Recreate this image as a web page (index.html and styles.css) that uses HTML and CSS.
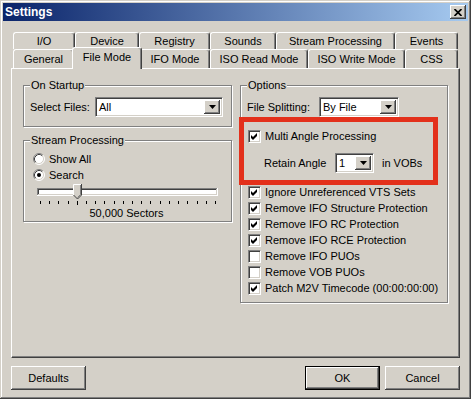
FILE: index.html
```html
<!DOCTYPE html>
<html>

<head>
	<meta charset="utf-8">
	<title>Settings</title>
	<link rel="stylesheet" href="styles.css">
</head>

<body>
	<div class="window">
		<div class="titlebar">
			<span class="title">Settings</span>
			<span class="closeBtn">
				<svg width="8" height="7" viewBox="0 0 8 7">
					<path d="M0.5 0 L7.5 7 M7.5 0 L0.5 7" stroke="#000" stroke-width="1.7" />
				</svg>
			</span>
		</div>

		<div class="client">
			<div class="tabRow back">
				<div class="tab tab-io">I/O</div>
				<div class="tab tab-device">Device</div>
				<div class="tab tab-registry">Registry</div>
				<div class="tab tab-sounds">Sounds</div>
				<div class="tab tab-stream">Stream Processing</div>
				<div class="tab tab-events">Events</div>
			</div>
			<div class="tabRow front">
				<div class="tab tab-general">General</div>
				<div class="tab tab-filemode selected">File Mode</div>
				<div class="tab tab-ifomode">IFO Mode</div>
				<div class="tab tab-isoread">ISO Read Mode</div>
				<div class="tab tab-isowrite">ISO Write Mode</div>
				<div class="tab tab-css">CSS</div>
			</div>

			<div class="panel">
				<div class="col">
					<div class="group">
						<span class="groupLabel">On Startup</span>
						<div class="field">
							<span>Select Files:</span>
							<div class="combo combo-files">
								<span class="value">All</span>
								<span class="drop"><svg width="7" height="4" viewBox="0 0 7 4"><path d="M0 0H7L3.5 4Z" /></svg></span>
							</div>
						</div>
					</div>

					<div class="group stream">
						<span class="groupLabel">Stream Processing</span>
						<div class="option first">
							<svg class="radio" width="12" height="12" viewBox="0 0 12 12">
								<circle cx="6" cy="6" r="5" fill="#fff" />
								<path d="M2.11 9.89 A5.5 5.5 0 0 1 9.89 2.11" fill="none" stroke="#808080" />
								<path d="M2.11 9.89 A5.5 5.5 0 0 0 9.89 2.11" fill="none" stroke="#fff" />
								<path d="M2.82 9.18 A4.5 4.5 0 0 1 9.18 2.82" fill="none" stroke="#404040" />
								<path d="M2.82 9.18 A4.5 4.5 0 0 0 9.18 2.82" fill="none" stroke="#d4d0c8" />
							</svg>
							<span>Show All</span>
						</div>
						<div class="option">
							<svg class="radio" width="12" height="12" viewBox="0 0 12 12">
								<circle cx="6" cy="6" r="5" fill="#fff" />
								<path d="M2.11 9.89 A5.5 5.5 0 0 1 9.89 2.11" fill="none" stroke="#808080" />
								<path d="M2.11 9.89 A5.5 5.5 0 0 0 9.89 2.11" fill="none" stroke="#fff" />
								<path d="M2.82 9.18 A4.5 4.5 0 0 1 9.18 2.82" fill="none" stroke="#404040" />
								<path d="M2.82 9.18 A4.5 4.5 0 0 0 9.18 2.82" fill="none" stroke="#d4d0c8" />
								<circle cx="6" cy="6" r="2" fill="#000" />
							</svg>
							<span>Search</span>
						</div>

						<svg class="slider" width="192" height="23" viewBox="0 0 192 23">
							<rect x="7" y="5" width="181" height="8" fill="#fff" />
							<rect x="7" y="5" width="180" height="1" fill="#808080" />
							<rect x="7" y="5" width="1" height="7" fill="#808080" />
							<rect x="8" y="6" width="178" height="1" fill="#404040" />
							<rect x="8" y="6" width="1" height="5" fill="#404040" />
							<rect x="8" y="11" width="179" height="1" fill="#d4d0c8" />
							<rect x="186" y="6" width="1" height="6" fill="#d4d0c8" />
							<!-- thumb -->
							<path d="M43 1H52V12L47.5 16.5L43 12Z" fill="#d4d0c8" />
							<path d="M43.5 12V1.5H51" fill="none" stroke="#fff" />
							<path d="M51.5 1V12L47.5 16L43.5 12" fill="none" stroke="#404040" />
							<path d="M50.5 2V11.5L47.5 14.5" fill="none" stroke="#808080" />
							<!-- ticks -->
							<path d="M10.5 18v3M19.5 18v3M28.5 18v3M38.5 18v3M47.5 18v4M56.5 18v3M65.5 18v3M74.5 18v3M84.5 18v3M93.5 18v3M102.5 18v3M111.5 18v3M120.5 18v3M130.5 18v3M139.5 18v3M148.5 18v3M157.5 18v3M167.5 18v3M176.5 18v3M185.5 18v3" stroke="#000" />
						</svg>
						<div class="sliderText">50,000 Sectors</div>
					</div>
				</div>

				<div class="col">
					<div class="group options">
						<span class="groupLabel">Options</span>
						<div class="field split">
							<span class="splitLabel">File Splitting:</span>
							<div class="combo combo-split">
								<span class="value">By File</span>
								<span class="drop"><svg width="7" height="4" viewBox="0 0 7 4"><path d="M0 0H7L3.5 4Z" /></svg></span>
							</div>
						</div>

						<div class="check multi">
							<span class="box"><svg width="7" height="7" viewBox="0 0 7 7"><path d="M0 2L2 4L6 0V3L2 7L0 5Z" /></svg></span>
							<span>Multi Angle Processing</span>
						</div>
						<div class="field retain">
							<span class="retainLabel">Retain Angle</span>
							<div class="combo combo-angle">
								<span class="value">1</span>
								<span class="drop"><svg width="7" height="4" viewBox="0 0 7 4"><path d="M0 0H7L3.5 4Z" /></svg></span>
							</div>
							<span class="vobs">in VOBs</span>
						</div>

						<div class="checkList">
							<div class="check">
								<span class="box"><svg width="7" height="7" viewBox="0 0 7 7"><path d="M0 2L2 4L6 0V3L2 7L0 5Z" /></svg></span>
								<span>Ignore Unreferenced VTS Sets</span>
							</div>
							<div class="check">
								<span class="box"><svg width="7" height="7" viewBox="0 0 7 7"><path d="M0 2L2 4L6 0V3L2 7L0 5Z" /></svg></span>
								<span>Remove IFO Structure Protection</span>
							</div>
							<div class="check">
								<span class="box"><svg width="7" height="7" viewBox="0 0 7 7"><path d="M0 2L2 4L6 0V3L2 7L0 5Z" /></svg></span>
								<span>Remove IFO RC Protection</span>
							</div>
							<div class="check">
								<span class="box"><svg width="7" height="7" viewBox="0 0 7 7"><path d="M0 2L2 4L6 0V3L2 7L0 5Z" /></svg></span>
								<span>Remove IFO RCE Protection</span>
							</div>
							<div class="check">
								<span class="box"></span>
								<span>Remove IFO PUOs</span>
							</div>
							<div class="check">
								<span class="box"></span>
								<span>Remove VOB PUOs</span>
							</div>
							<div class="check">
								<span class="box"><svg width="7" height="7" viewBox="0 0 7 7"><path d="M0 2L2 4L6 0V3L2 7L0 5Z" /></svg></span>
								<span>Patch M2V Timecode (00:00:00:00)</span>
							</div>
						</div>

						<div class="mark"></div>
					</div>
				</div>
			</div>

			<div class="buttons">
				<div class="btn">Defaults</div>
				<div class="btn ok">OK</div>
				<div class="btn cancel">Cancel</div>
			</div>
		</div>
	</div>
</body>

</html>
```

FILE: styles.css
```css
body {
	margin: 0;
	background-color: #d4d0c8;
	font-family: "Liberation Sans", Arial, sans-serif;
	font-size: 11px;
	color: #000;
}

.window {
	width: 471px;
	height: 399px;
	box-sizing: border-box;
	padding: 3px;
	background-color: #d4d0c8;
	box-shadow: inset -1px -1px #404040, inset 1px 1px #d4d0c8, inset -2px -2px #808080, inset 2px 2px #fff;
}

.titlebar {
	height: 18px;
	display: flex;
	align-items: center;
	justify-content: space-between;
	padding: 0 2px;
	background: linear-gradient(to right, #0a246a, #a6caf0);
}

.title {
	color: #fff;
	font-weight: bold;
	font-size: 12px;
}

.closeBtn {
	width: 16px;
	height: 14px;
	box-sizing: border-box;
	display: flex;
	align-items: center;
	justify-content: center;
	background-color: #d4d0c8;
	box-shadow: inset -1px -1px #404040, inset 1px 1px #fff, inset -2px -2px #808080;
}

.client {
	padding: 11px 8px 0;
}

/* tabs */

.tabRow {
	display: flex;
	margin-left: 2px;
}

.back {
	height: 17px;
}

.front {
	height: 19px;
}

.tab {
	box-sizing: border-box;
	height: 100%;
	border: 1px solid;
	border-color: #fff #404040 transparent #fff;
	border-bottom: 0;
	border-radius: 3px 3px 0 0;
	box-shadow: inset -1px 0 #808080;
	background-color: #d4d0c8;
	text-align: center;
	line-height: 16px;
	white-space: nowrap;
}

.front .tab {
	line-height: 18px;
}

.front .tab.selected {
	height: 22px;
	margin: -2px -2px 0;
	line-height: 19px;
	position: relative;
	z-index: 1;
}

.tab-io { width: 62px; }
.tab-device { width: 64px; }
.tab-registry { width: 71px; }
.tab-sounds { width: 66px; }
.tab-stream { width: 119px; }
.tab-events { width: 63px; }

.tab-general { width: 61px; }
.tab-filemode { width: 70px; }
.tab-ifomode { width: 70px; }
.tab-isoread { width: 98px; }
.tab-isowrite { width: 97px; }
.tab-css { width: 53px; }

/* panel */

.panel {
	height: 290px;
	box-sizing: border-box;
	border: 1px solid;
	border-color: #fff #404040 #404040 #fff;
	box-shadow: inset -1px -1px #808080;
	padding: 16px 11px 0;
	display: grid;
	grid-template-columns: 209px 208px;
	column-gap: 8px;
	align-items: start;
}

.group {
	border: 1px solid #808080;
	box-shadow: inset 1px 1px #fff, 1px 1px #fff;
	padding: 0 8px 9px 6px;
}

.group.stream {
	margin-top: 13px;
	padding-bottom: 1px;
}

.group.options {
	position: relative;
	padding-bottom: 6px;
}

.groupLabel {
	display: table;
	margin-top: -7px;
	padding: 0 1px;
	line-height: 13px;
	background-color: #d4d0c8;
}

.field {
	display: flex;
	align-items: center;
	justify-content: space-between;
	height: 20px;
	margin-top: 5px;
}

.combo {
	height: 20px;
	box-sizing: border-box;
	display: flex;
	padding: 2px;
	background-color: #fff;
	border: 1px solid;
	border-color: #808080 #fff #fff #808080;
	box-shadow: inset 1px 1px #404040, inset -1px -1px #d4d0c8;
}

.combo .value {
	flex: 1;
	line-height: 14px;
	padding-left: 1px;
}

.combo .drop {
	width: 16px;
	height: 14px;
	box-sizing: border-box;
	display: flex;
	align-items: center;
	justify-content: center;
	background-color: #d4d0c8;
	box-shadow: inset -1px -1px #404040, inset 1px 1px #fff, inset -2px -2px #808080;
}

.combo-files { width: 128px; }
.combo-split { width: 80px; }
.combo-angle { width: 39px; }

/* stream processing */

.option {
	display: flex;
	align-items: center;
	height: 16px;
	padding-left: 3px;
}

.option.first {
	margin-top: 4px;
}

.radio {
	margin-right: 4px;
}

.slider {
	display: block;
}

.sliderText {
	text-align: center;
	line-height: 14px;
}

/* options */

.split {
	justify-content: flex-start;
}

.splitLabel {
	width: 72px;
}

.check {
	display: flex;
	align-items: center;
	height: 16px;
	padding-left: 1px;
}

.check.multi {
	margin-top: 11px;
}

.box {
	width: 13px;
	height: 13px;
	box-sizing: border-box;
	margin-right: 4px;
	display: flex;
	align-items: center;
	justify-content: center;
	background-color: #fff;
	border: 1px solid;
	border-color: #808080 #fff #fff #808080;
	box-shadow: inset 1px 1px #404040, inset -1px -1px #d4d0c8;
}

.retain {
	justify-content: flex-start;
	margin-top: 9px;
	padding-left: 17px;
}

.retainLabel {
	width: 71px;
}

.vobs {
	margin-left: 8px;
}

.checkList {
	margin-top: 11px;
}

.mark {
	position: absolute;
	left: -2px;
	top: 31px;
	width: 199px;
	height: 68px;
	box-sizing: border-box;
	border: 5px solid #e3301b;
}

/* buttons */

.buttons {
	display: flex;
	margin-top: 8px;
}

.btn {
	width: 75px;
	height: 24px;
	box-sizing: border-box;
	display: flex;
	align-items: center;
	justify-content: center;
	box-shadow: inset -1px -1px #404040, inset 1px 1px #fff, inset -2px -2px #808080;
}

.ok {
	margin-left: auto;
	border: 1px solid #000;
}

.cancel {
	margin-left: 5px;
}
```
